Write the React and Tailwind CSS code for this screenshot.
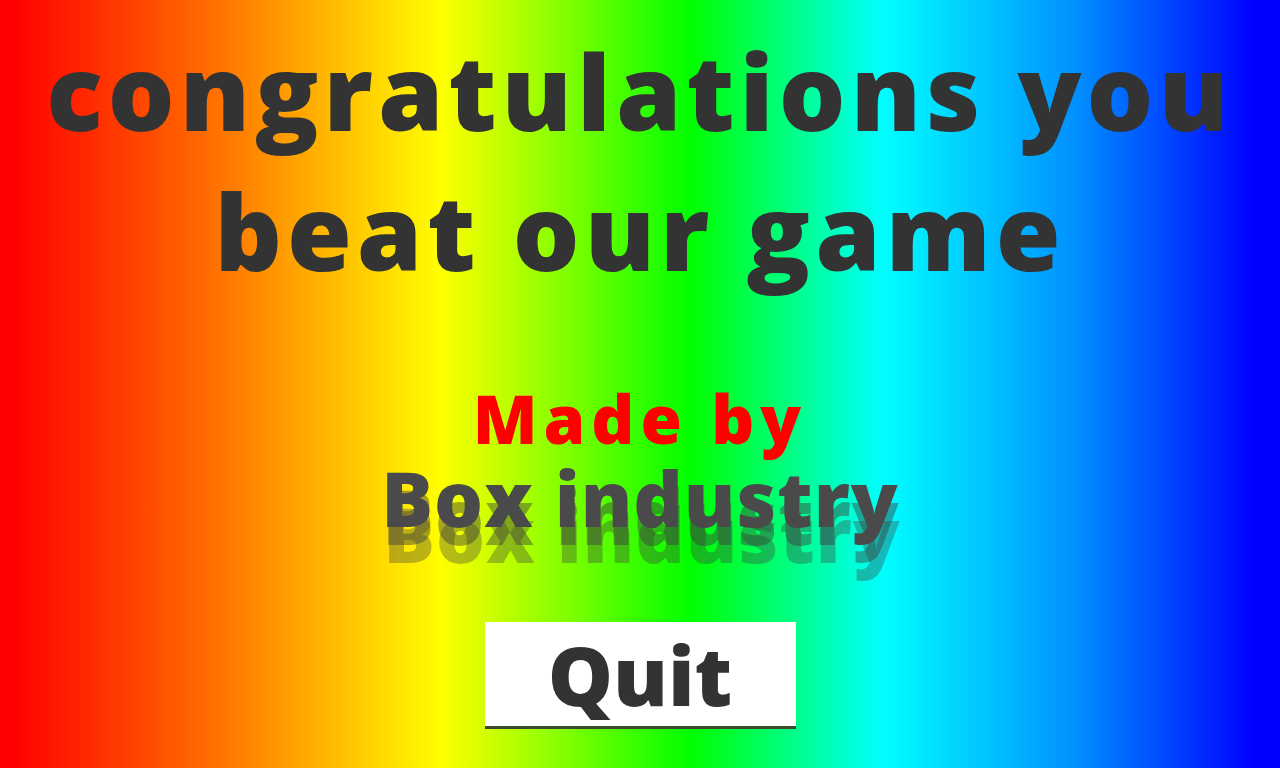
export default function App() {
  return (
    <div
      className="w-[1280px] h-[768px] overflow-hidden flex flex-col items-center bg-[linear-gradient(to_right,#ff0000_1%,#ff6a00_16%,#ffff00_34.5%,#00ff00_54%,#00ffff_69%,#0090ff_84%,#0000ff_98%)]"
      style={{ fontFamily: "'Open Sans', Roboto, sans-serif" }}
    >
      <h1 className="mt-[21px] text-center font-extrabold text-[#333333] text-[105px] leading-[140px] tracking-[5px]">
        congratulations you
        <br />
        beat our game
      </h1>
      <div className="mt-[77px] text-center font-extrabold text-[#ff0000] text-[67px] leading-[80px] tracking-[6px]">
        Made by
      </div>
      <div className="mt-[-2px] text-center font-extrabold text-[#4a4a4a] text-[77px] leading-[84px] tracking-[1px] [text-shadow:1px_18px_0_rgba(60,60,60,0.45),2px_36px_0_rgba(60,60,60,0.35)]">
        Box industry
      </div>
      <button className="mt-[82px] w-[311px] h-[104px] bg-white flex items-center justify-center font-extrabold text-[#333333] text-[82px] leading-none tracking-[0px] shadow-[0_3px_0_#3a4a2a]">
        Quit
      </button>
    </div>
  );
}
